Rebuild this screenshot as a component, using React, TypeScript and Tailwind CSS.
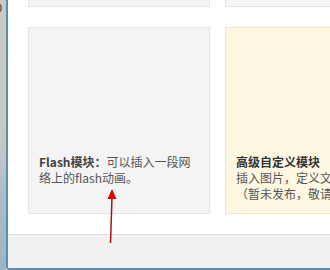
import React from "react";

export default function App() {
  const font = { fontFamily: '"Noto Sans CJK SC", "Noto Sans", sans-serif' };
  return (
    <div className="relative flex w-[330px] h-[270px] overflow-hidden bg-white" style={font}>
      {/* background strip on the left */}
      <div className="relative w-[6px] shrink-0 h-full bg-[linear-gradient(to_bottom,#c9c9c9_0%,#c6c7c7_55%,#a9bdca_72%,#9fb4c2_100%)] overflow-hidden">
        <span className="absolute left-[-4px] top-[0px] text-[11px] leading-[14px] text-[#333]">0</span>
      </div>

      {/* dialog */}
      <div className="flex flex-col flex-1 min-w-0 h-full border-l-2 border-b-2 border-[#5a8fb1] rounded-bl-[3px] bg-white overflow-hidden">
        <div className="h-[234px] shrink-0 pl-[20px] overflow-hidden">
          {/* top row (cut) */}
          <div className="flex gap-[15px] h-[7px]">
            <div className="w-[182px] shrink-0 h-full bg-[#f4f4f4] border-x border-b border-[#e6e6e6]" />
            <div className="w-[182px] shrink-0 h-full bg-[#f7f7f7] border-x border-b border-[#e6e6e6]" />
          </div>
          {/* second row */}
          <div className="flex gap-[15px] mt-[20px] h-[187px]">
            <div className="w-[182px] shrink-0 h-full bg-[#f4f4f4] border border-[#e6e6e6] pt-[126px] pl-[10px] text-[12px] leading-[16px] text-[#555] whitespace-nowrap">
              <div>
                <span className="font-bold text-[#444]">Flash模块：</span>可以插入一段网
              </div>
              <div>络上的flash动画。</div>
            </div>
            <div className="w-[182px] shrink-0 h-full bg-[#fef8e3] border border-[#f2e7c3] pt-[126px] pl-[10px] text-[12px] leading-[16px] text-[#555] whitespace-nowrap">
              <div className="font-bold text-[#333]">高级自定义模块</div>
              <div>插入图片，定义文字，代码等</div>
              <div>（暂未发布，敬请期待）</div>
            </div>
          </div>
        </div>
        <div className="flex-1 border-t border-[#dedede] bg-[#f1f1f1]" />
      </div>

      {/* red annotation arrow */}
      <svg className="absolute left-0 top-0 pointer-events-none" width="330" height="270" viewBox="0 0 330 270">
        <line x1="110.5" y1="243" x2="112" y2="197" stroke="#a51414" strokeWidth="1.5" />
        <polygon points="112,189 107.5,199 116.5,199" fill="#e10000" />
      </svg>
    </div>
  );
}
